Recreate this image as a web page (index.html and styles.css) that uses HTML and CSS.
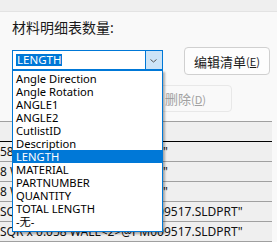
FILE: index.html
```html
<!DOCTYPE html>
<html>
<head>
<meta charset="utf-8">
<link rel="stylesheet" href="styles.css">
</head>
<body>
<div class="topbar"></div>
<div class="panel">
  <div class="label">材料明细表数量:</div>
  <div class="row">
    <div class="combo">
      <span class="combo-value">LENGTH</span>
      <span class="combo-btn">
        <svg width="16" height="18" viewBox="0 0 16 18"><path d="M4.5 8.5 L7.5 11 L10.5 8.5" fill="none" stroke="#555" stroke-width="1"/></svg>
      </span>
      <ul class="dropdown">
        <li>Angle Direction</li>
        <li>Angle Rotation</li>
        <li>ANGLE1</li>
        <li>ANGLE2</li>
        <li>CutlistID</li>
        <li>Description</li>
        <li class="sel">LENGTH</li>
        <li>MATERIAL</li>
        <li>PARTNUMBER</li>
        <li>QUANTITY</li>
        <li>TOTAL LENGTH</li>
        <li>-无-</li>
      </ul>
    </div>
    <button class="btn">编辑清单<span class="key">(<u>E</u>)</span></button>
  </div>
  <div class="row2">
    <button class="btn btn-disabled">删除<span class="key">(<u>D</u>)</span></button>
  </div>
</div>
<div class="table">
  <div class="thead"></div>
  <div class="trow">58 WALL&lt;1&gt;@PM009517-123"</div>
  <div class="trow">8 WALL&lt;1&gt;@PM009517-1234"</div>
  <div class="trow">8 WALL&lt;2&gt;@PM009517-1234"</div>
  <div class="trow">SQR x 0.058 WALL&lt;1&gt;@PM009517.SLDPRT"</div>
  <div class="trow">SQR x 0.058 WALL&lt;2&gt;@PM009517.SLDPRT"</div>
</div>
</body>
</html>
```

FILE: styles.css
```css
html, body {
  margin: 0;
  padding: 0;
}
body {
  width: 277px;
  height: 242px;
  overflow: hidden;
  background: #f9f9f9;
  font-family: "Noto Sans", "Noto Sans CJK SC", sans-serif;
  color: #1a1a1a;
}
.topbar {
  height: 11px;
  background: #efefef;
  border-bottom: 1px solid #e3e3e3;
}
.panel {
  padding-left: 12px;
}
.label {
  margin-top: 6px;
  font-size: 14px;
  line-height: 19px;
  height: 19px;
}
.row {
  margin-top: 10px;
  display: flex;
  align-items: flex-start;
  height: 28px;
}
.combo {
  position: relative;
  margin-top: 3px;
  width: 151px;
  height: 20px;
  box-sizing: border-box;
  border: 1px solid #0078d7;
  background: #fff;
  display: flex;
  align-items: flex-start;
}
.combo-value {
  margin: 3px 0 0 3px;
  height: 12px;
  padding: 0 1px;
  background: #0078d7;
  color: #fff;
  font-size: 11.5px;
  line-height: 12px;
}
.combo-btn {
  margin-left: auto;
  width: 16px;
  height: 18px;
  background: #cce4f7;
  border-left: 1px solid #0078d7;
  display: flex;
}
.dropdown {
  position: absolute;
  top: 19px;
  left: -1px;
  width: 151px;
  box-sizing: border-box;
  margin: 0;
  padding: 1px 0 3px;
  list-style: none;
  background: #fff;
  border: 1px solid #0078d7;
  box-shadow: 2px 2px 2px rgba(0, 0, 0, 0.3);
  z-index: 5;
}
.dropdown li {
  height: 13px;
  line-height: 13px;
  font-size: 11.2px;
  padding-left: 3px;
  color: #000;
  white-space: nowrap;
}
.dropdown li.sel {
  background: #0078d7;
  color: #fff;
}
.btn {
  margin-left: 21px;
  width: 86px;
  height: 28px;
  box-sizing: border-box;
  border: 1px solid #d0d0d0;
  border-radius: 4px;
  background: #fdfdfd;
  font-family: "Noto Sans CJK SC", "Noto Sans", sans-serif;
  font-size: 13px;
  color: #1a1a1a;
  padding: 0;
  display: flex;
  align-items: center;
  justify-content: center;
}
.key {
  font-size: 11px;
}
.row2 {
  margin-top: 10px;
  height: 27px;
  display: flex;
}
.btn-disabled {
  margin-left: 127px;
  width: 93px;
  height: 27px;
  border-color: #e8e8e8;
  background: #f9f9f9;
  color: #a0a0a0;
}
.table {
  margin-top: 9px;
  width: 272px;
  background: #efefef;
  border-top: 1px solid #a0a0a0;
}
.thead {
  height: 19px;
  border-bottom: 1px solid #000;
}
.trow {
  height: 19px;
  line-height: 19px;
  border-bottom: 1px solid #a0a0a0;
  font-size: 12px;
  white-space: nowrap;
  overflow: hidden;
  color: #111;
}
```
